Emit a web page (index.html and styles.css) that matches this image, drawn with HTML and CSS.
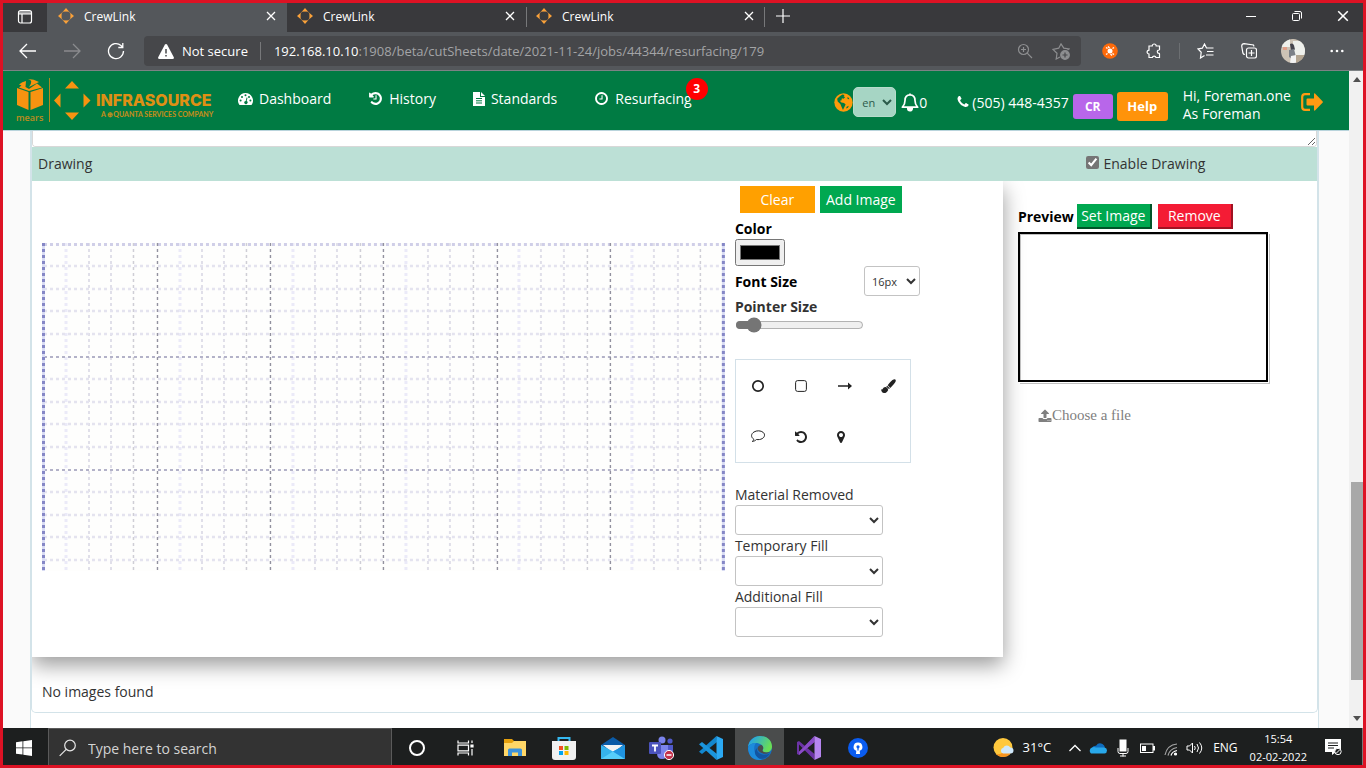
FILE: index.html
```html
<!DOCTYPE html>
<html lang="en">
<head>
<meta charset="utf-8">
<title>CrewLink</title>
<link rel="stylesheet" href="styles.css">
</head>
<body>
<svg class="defs" aria-hidden="true">
  <symbol id="i-crew" viewBox="0 0 16 16"><path fill="#f9a13a" d="M5 3.500 8 0l3 3.500zM5 12.500h6L8 16zM3.500 5v6L0 8zM12.500 5 16 8l-3.500 3z"/><circle cx="8" cy="8" r="5.200" fill="none" stroke="#f9a13a" stroke-width=".7" opacity=".6"/></symbol>
  <symbol id="i-x" viewBox="0 0 10 10"><path d="m1 1 8 8M9 1 1 9" fill="none" stroke="currentColor" stroke-width="1.300"/></symbol>
  <symbol id="i-clock" viewBox="0 0 1792 1792"><path fill="currentColor" d="M1024 544v448q0 14-9 23t-23 9h-320q-14 0-23-9t-9-23v-64q0-14 9-23t23-9h224v-352q0-14 9-23t23-9h64q14 0 23 9t9 23zm416 352q0-148-73-273t-198-198-273-73-273 73-198 198-73 273 73 273 198 198 273 73 273-73 198-198 73-273zm224 0q0 209-103 385.500t-279.500 279.500-385.500 103-385.500-103-279.500-279.500-103-385.500 103-385.500 279.500-279.500 385.500-103 385.500 103 279.500 279.500 103 385.500z"/></symbol>
  <symbol id="i-undo" viewBox="0 0 1792 1792"><path fill="currentColor" d="M1664 896q0 156-61 298t-164 245-245 164-298 61q-172 0-327-72.500t-264-204.500q-7-10-6.500-22.500t8.500-20.500l137-138q10-9 25-9 16 2 23 12 73 95 179 147t225 52q104 0 198.500-40.500t163.500-109.500 109.500-163.500 40.500-198.500-40.500-198.500-109.500-163.500-163.500-109.500-198.500-40.500q-98 0-188 35.500t-160 101.500l137 138q31 30 14 69-17 40-59 40h-448q-26 0-45-19t-19-45v-448q0-42 40-59 39-17 69 14l130 129q107-101 244.500-156.500t284.500-55.500q156 0 298 61t245 164 164 245 61 298z"/></symbol>
</svg>

<div class="tabstrip">
  <button class="tab-actions" aria-label="Tab actions"><svg width="16" height="16" viewBox="0 0 16 16" fill="none" stroke="#fff" stroke-width="1.200"><rect x="1.500" y="1.500" width="13" height="12.500" rx="2"/><path d="M2 3h12M1.500 4.800h13M5 5v9" /></svg></button>
  <div class="tab tab-active"><svg width="16" height="16"><use href="#i-crew"/></svg><a href="#">CrewLink</a><button aria-label="Close tab"><svg width="10" height="10"><use href="#i-x"/></svg></button></div>
  <div class="tab"><svg width="16" height="16"><use href="#i-crew"/></svg><a href="#">CrewLink</a><button aria-label="Close tab"><svg width="10" height="10"><use href="#i-x"/></svg></button></div>
  <div class="tab tab-divided"><svg width="16" height="16"><use href="#i-crew"/></svg><a href="#">CrewLink</a><button aria-label="Close tab"><svg width="10" height="10"><use href="#i-x"/></svg></button></div>
  <button class="new-tab" aria-label="New tab"><svg width="14" height="14" viewBox="0 0 14 14"><path d="M7 0v14M0 7h14" stroke="#fff" stroke-width="1.200"/></svg></button>
  <div class="window-buttons">
    <button aria-label="Minimize"><svg width="10" height="10" viewBox="0 0 10 10"><path d="M0 5.500h10" stroke="#fff"/></svg></button>
    <button aria-label="Restore"><svg width="10" height="10" viewBox="0 0 10 10" fill="none" stroke="#fff"><rect x=".5" y="2.500" width="7" height="7" rx="1"/><path d="M2.500.500H8A1.500 1.500 0 0 1 9.500 2v5.500"/></svg></button>
    <button aria-label="Close"><svg width="12" height="12"><use href="#i-x"/></svg></button>
  </div>
</div>

<div class="toolbar">
  <button class="tool" aria-label="Back"><svg width="18" height="16" viewBox="0 0 18 16" fill="none" stroke="#fff" stroke-width="1.300"><path d="M17 8H1.500M8 1 1 8l7 7"/></svg></button>
  <button class="tool" aria-label="Forward"><svg width="18" height="16" viewBox="0 0 18 16" fill="none" stroke="#8a8b8e" stroke-width="1.300"><path d="M1 8h15.500M10 1l7 7-7 7"/></svg></button>
  <button class="tool" aria-label="Reload"><svg width="18" height="18" viewBox="0 0 18 18" fill="none" stroke="#fff" stroke-width="1.300"><path d="M16.500 9A7.500 7.500 0 1 1 14 3.500L15.500 5M15.800 1v4.500h-4.500"/></svg></button>
  <div class="address">
    <svg width="16" height="15" viewBox="0 0 16 15"><path fill="#fff" d="M8 0q.8 0 1.200.7l6.600 12.500Q16.300 15 14.500 15h-13Q-.3 15 .2 13.200L6.800.7Q7.200 0 8 0z"/><path stroke="#46474a" stroke-width="1.500" d="M8 5v4.500M8 11v1.600"/></svg>
    <span class="not-secure">Not secure</span>
    <span class="url" role="textbox" aria-label="Address"><b>192.168.10.10</b>:1908/beta/cutSheets/date/2021-11-24/jobs/44344/resurfacing/179</span>
    <button aria-label="Zoom"><svg width="16" height="16" viewBox="0 0 16 16" fill="none" stroke="#8d8e90" stroke-width="1.200"><circle cx="6.500" cy="6.500" r="5"/><path d="m10.200 10.200 4.800 4.800M4 6.500h5M6.500 4v5"/></svg></button>
    <button aria-label="Add to favorites"><svg width="18" height="17" viewBox="0 0 18 17" fill="none" stroke="#8d8e90" stroke-width="1.200"><path d="M15.500 7 17 6l-5.200-.8L9 .9 6.700 5.200 1 6.300l4 4L4.200 16 8 14"/><circle cx="13" cy="12" r="4.300" fill="#8d8e90"/><path stroke="#46474a" d="M10.500 12h5M13 9.500v5"/></svg></button>
  </div>
  <button class="tool" aria-label="Extension"><svg width="16" height="16" viewBox="0 0 16 16"><circle cx="8" cy="8" r="7.800" fill="#fd6a0a"/><path stroke="#fff" stroke-width="1.300" d="m4 4.500 1.500 1M12 4.500l-1.500 1M4 11.500l1.500-1M12 11.500l-1.500-1M6 3.500 7.500 5M10 12.500 8.500 11"/><circle cx="8" cy="8" r="2.500" fill="#fff"/></svg></button>
  <button class="tool" aria-label="Extensions"><svg width="16" height="16" viewBox="0 0 16 16" fill="none" stroke="#fff" stroke-width="1.200"><path d="M3 3h3.200a2 2 0 1 1 4 0H13.500v3.500a1 1 0 0 1-.5.500 1.700 1.700 0 0 0 0 3.400q.5 0 .5.600V14.500H10a1.900 1.900 0 0 0-3.700 0H3V11a1.900 1.900 0 1 1 0-3.800z"/></svg></button>
  <span class="tool-divider"></span>
  <button class="tool" aria-label="Favorites"><svg width="17" height="16" viewBox="0 0 17 16" fill="none" stroke="#fff" stroke-width="1.200"><path d="M10 5H9.500L7.500 1 5.300 5.200 1 6l3.200 3.300L3.500 15l4-2.500M10 5h6.500M10 8.500h6.500M9 12h7.500"/></svg></button>
  <button class="tool" aria-label="Collections"><svg width="16" height="16" viewBox="0 0 16 16" fill="none" stroke="#fff" stroke-width="1.200"><path d="M13 3.500 12.500 2 3 .7Q1 .7.700 3l1.200 7q.4 1.500 2 1.500"/><rect x="5.500" y="5" width="10" height="10" rx="2"/><path d="M7.500 10h6M10.500 7v6"/></svg></button>
  <button class="tool" aria-label="Profile"><svg width="24" height="24" viewBox="0 0 24 24"><clipPath id="av"><circle cx="12" cy="12" r="12"/></clipPath><g clip-path="url(#av)"><path fill="#cdc3b5" d="M0 0h24v24H0z"/><path fill="#eef0ec" d="M12 2h12v14H12zM0 0h9v8H0z"/><path fill="#e0a08a" d="M2 8h4v3H2z"/><path fill="#b3a592" d="M15 16h9v8h-9z"/><path fill="#45454d" d="M9 5q3-1.500 4 1.500l1 4-4 1z"/><path fill="#7b8088" d="m8 11 5-1 2 8-4 2-3-2z"/><path fill="#f3f3f3" d="m10 17 5-1v8H9z"/></g></svg></button>
  <button class="tool" aria-label="More"><svg width="14" height="4" viewBox="0 0 14 4" fill="#fff"><circle cx="1.700" cy="2" r="1.300"/><circle cx="7" cy="2" r="1.300"/><circle cx="12.300" cy="2" r="1.300"/></svg></button>
</div>

<div class="viewport">
  <div class="site">
    <header class="header">
      <a class="logo" href="#" aria-label="Mears InfraSource"><svg width="202" height="46" viewBox="0 0 202 46" fill="#f79310">
        <path d="M12 1q6 0 11 3L13 9q5-7-1-8zM10 3 9.500 9 3 6.500Q6 3.500 10 3zM1 10l11.500 4v18L1 27zM27 10v17L14.500 32V14zM3 9.500 6 7l7 4 8-5.500 5 4-13 3.500z"/>
        <text x="0" y="43" class="logo-mears">mears</text>
        <path d="M33 0h1v44h-1z" opacity=".7"/>
        <path d="M49 10.500 56 3l7 7.500zM49 34.500h14L56 42zM44.500 15.500v14L38 22.500zM67.500 15.500l7 7-7 7z"/>
        <text x="80" y="28" class="logo-name">INFRASOURCE</text>
        <text x="85" y="39" class="logo-sub">A ⊕QUANTA SERVICES COMPANY</text>
      </svg></a>
      <nav class="nav">
        <a href="#"><svg width="15" height="12" viewBox="0 0 15 12"><path fill="#fff" d="M7.500 0A7.500 7.500 0 0 1 13.800 11.500q-.2.500-.8.500H2q-.6 0-.8-.5A7.500 7.500 0 0 1 7.500 0z"/><g fill="#007b43"><circle cx="2.600" cy="7.500" r="1"/><circle cx="4" cy="4" r="1"/><circle cx="7.500" cy="2.300" r="1"/><circle cx="11" cy="4" r="1"/><circle cx="12.400" cy="7.500" r="1"/><path d="m8.600 4.500.9.300-.8 3.300a1.600 1.600 0 1 1-1-.2z"/></g></svg>Dashboard</a>
        <a href="#"><svg width="15" height="15" viewBox="0 0 1792 1792"><use href="#i-undo"/><path fill="#fff" d="M1024 544v448q0 14-9 23t-23 9h-320q-14 0-23-9t-9-23v-64q0-14 9-23t23-9h224v-352q0-14 9-23t23-9h64q14 0 23 9t9 23z"/></svg>History</a>
        <a href="#"><svg width="12" height="14" viewBox="0 0 12 14"><path fill="#fff" d="M0 0h7v5h5v9H0zM8 0l4 4H8z"/><path stroke="#007b43" d="M3 6.500h6M3 8.800h6M3 11h6"/></svg>Standards</a>
        <a href="#" class="has-badge"><svg width="15" height="15"><use href="#i-clock"/></svg>Resurfacing<span class="badge">3</span></a>
      </nav>
      <div class="account">
        <svg width="19" height="19" viewBox="0 0 18 18"><circle cx="9" cy="9" r="8.700" fill="#ff9a0a"/><path fill="#007b43" d="m8 1.500 2 .3-.8 1.200L10.500 4 9 5.500 7.500 5 7 7l-1.500.3L7 9l2.500.5L11 11l-1.500 3-1 2-1.200-2.500L6 10.500 3.500 8 3 5.500 5.500 3zM12 13l2-1-.8 2-1.700.8zM12.500 4l1.500.5.500 1.500-1.500-.4z"/></svg>
        <select class="lang" aria-label="Language"><option>en</option></select>
        <a class="bell" href="#"><svg width="18" height="20" viewBox="0 0 18 20" fill="none" stroke="#fff" stroke-width="1.700"><path d="M9 1.500V3M9 2.800C5.500 2.800 4 5.500 4 8.500c0 4-1.500 5.300-2.700 6.700h15.400C15.500 13.800 14 12.500 14 8.500c0-3-1.500-5.700-5-5.700z" stroke-linejoin="round"/><path d="M6.800 16.500a2.200 2.200 0 0 0 4.400 0z" fill="#fff"/></svg>0</a>
        <a class="phone" href="tel:5054484357"><svg width="14" height="14" viewBox="0 0 1792 1792"><path fill="#fff" d="M1600 1240q0 27-10 70.500t-21 68.500q-21 50-122 106-94 51-186 51-27 0-53-3.500t-57-12.500-47-14.500-55.500-20.500-49-18q-98-35-175-83-127-79-264-216t-216-264q-48-77-83-175-3-9-18-49t-20.500-55.500-14.500-47-12.500-57-3.500-53q0-92 51-186 56-101 106-122 25-11 68.500-21t70.500-10q14 0 21 3 18 6 53 76 11 19 30 54t35 63.500 31 53.500q3 4 17.500 25t21.500 35.500 7 28.500q0 20-28.500 50t-62 55-62 53-28.500 46q0 9 5 22.500t8.500 20.500 14 24 11.500 19q76 137 174 235t235 174q2 1 19 11.500t24 14 20.500 8.500 22.500 5q18 0 46-28.500t53-62 55-62 50-28.500q14 0 28.500 7t35.500 21.500 25 17.500q25 15 53.500 31t63.500 35 54 30q70 35 76 53 3 7 3 21z"/></svg>(505) 448-4357</a>
        <button class="cr">CR</button>
        <button class="help">Help</button>
        <p class="hello">Hi, Foreman.one<br>As Foreman</p>
        <button class="logout" aria-label="Log out"><svg width="22" height="18" viewBox="0 0 22 18"><path d="M9 1.200H4Q1.200 1.200 1.200 4v10q0 2.800 2.800 2.800h5" fill="none" stroke="#ff9a12" stroke-width="2.200"/><path fill="#ff9a12" d="M6.500 5.500H13V1q0-1 1-.5l7.500 7.700q.8.800 0 1.600L14 17.500q-1 .5-1-.5v-4.500H6.500q-1 0-1-1v-5q0-1 1-1z"/></svg></button>
      </div>
    </header>

    <main class="sheet">
      <section class="panel">
        <textarea class="notes" aria-label="Notes"></textarea>
        <div class="band">
          <h2>Drawing</h2>
          <label><input type="checkbox" checked>Enable Drawing</label>
        </div>
        <div class="work">
          <div class="card">
            <svg class="graph" viewBox="0 0 683 328" role="img" aria-label="Drawing canvas">
              <path fill="#fefefd" d="M0 0h683v328H0z"/>
              <g fill="none" stroke-dasharray="3 3">
                <path stroke="#ebeaf8" stroke-width="3" d="M24 0v328M138 0v328M251 0v328M364 0v328M477 0v328M590 0v328"/>
                <path stroke="#e0dfe9" stroke-width="2" d="M47 0v328M69 0v328M160 0v328M182 0v328M273 0v328M295 0v328M386 0v328M408 0v328M499 0v328M522 0v328M612 0v328M636 0v328"/>
                <path stroke="#cfced6" stroke-width="1.500" d="M91.500 0v328M204.500 0v328M318.500 0v328M431.500 0v328M545.500 0v328M658.500 0v328"/>
                <path stroke="#e4e3ef" stroke-width="2.500" d="M2 23h681M2 46h681M2 68h681M2 91h681M2 136h681M2 159h681M2 181h681M2 204h681M2 249h681M2 272h681M2 294h681M2 317h681"/>
                <path stroke="#d0cfe8" stroke-width="3" d="M2 1.500h681"/>
                <path stroke="#b3b2c8" stroke-width="2" d="M2 114h681M2 227h681"/>
                <path stroke="#92919f" stroke-width="1.400" d="M115.500 0v328M228.500 0v328M341.500 0v328M455.500 0v328M568.500 0v328"/>
                <path stroke="#d9dcf4" stroke-width="3" stroke-dasharray="none" d="M1.500 0v328M681.500 0v328"/>
                <path stroke="#8587c6" stroke-width="3" d="M1.500 0v328M681.500 0v328"/>
              </g>
            </svg>
            <div class="controls">
              <div class="buttons"><button class="clear">Clear</button><button class="add">Add Image</button></div>
              <label class="strong" for="color">Color</label>
              <input id="color" type="color" value="#000000">
              <div class="font-row"><label class="strong" for="size">Font Size</label><select id="size"><option>16px</option></select></div>
              <label class="strong soft" for="pointer">Pointer Size</label>
              <input id="pointer" type="range" min="0" max="100" value="10">
              <div class="tools">
                <button aria-label="Circle"><svg width="14" height="14" viewBox="0 0 14 14"><circle cx="7" cy="7" r="5.200" fill="none" stroke="#222" stroke-width="1.700"/></svg></button>
                <button aria-label="Rectangle"><svg width="12" height="12" viewBox="0 0 12 12"><rect x=".6" y=".6" width="10.800" height="10.800" rx="2" fill="none" stroke="#222"/></svg></button>
                <button aria-label="Arrow"><svg width="14" height="8" viewBox="0 0 14 8" fill="#222"><path d="M0 3.200h10V.6L14 4l-4 3.400V4.800H0z"/></svg></button>
                <button aria-label="Brush"><svg width="15" height="14" viewBox="0 0 15 14" fill="#222"><path d="M13.200.2q2 0 1.500 2-.8 2.200-5.400 6.700L6.700 6.300Q9.700 1.500 13.200.2zM6.200 6.800l2.600 2.500q-.3.600-.9.800L5.300 7.600zM4.500 8.100q2.400.3 2.700 2.800Q6 14 3 14 .5 14 0 10.300q.9.600 1.600-.3 1-2 2.900-1.900z"/></svg></button>
                <button aria-label="Comment"><svg width="14" height="13" viewBox="0 0 14 13" fill="none" stroke="#222"><path d="M2.800 9.200C-.6 7 .2 3.600 3 2 5.500.3 10 .4 12.200 2.400c2.200 2 1.500 4.800-1 6.200-1.700 1-3.700 1.200-5.700.9-1.200 1.200-2.500 1.700-4.200 2 1-.8 1.400-1.500 1.500-2.300z"/></svg></button>
                <button aria-label="Undo"><svg width="14" height="14"><use href="#i-undo"/></svg></button>
                <button class="marker" aria-label="Marker"><svg width="14" height="14" viewBox="0 0 1792 1792" fill="#222"><path d="M1152 640q0-106-75-181t-181-75-181 75-75 181 75 181 181 75 181-75 75-181zm256 0q0 109-33 179l-364 774q-16 33-47.500 52t-67.500 19-67.500-19-46.500-52l-365-774q-33-70-33-179 0-212 150-362t362-150 362 150 150 362z"/></svg></button>
              </div>
              <label for="m1">Material Removed</label><select id="m1" class="fill"><option></option></select>
              <label for="m2">Temporary Fill</label><select id="m2" class="fill"><option></option></select>
              <label for="m3">Additional Fill</label><select id="m3" class="fill"><option></option></select>
            </div>
          </div>
          <aside class="preview">
            <div class="preview-head"><span class="strong">Preview</span><button class="set">Set Image</button><button class="remove">Remove</button></div>
            <div class="preview-box"></div>
            <label class="choose"><svg width="14" height="14" viewBox="0 0 1792 1792"><path fill="#808080" d="M1344 1472q0-26-19-45t-45-19-45 19-19 45 19 45 45 19 45-19 19-45zm256 0q0-26-19-45t-45-19-45 19-19 45 19 45 45 19 45-19 19-45zm128-224v320q0 40-28 68t-68 28h-1472q-40 0-68-28t-28-68v-320q0-40 28-68t68-28h427q21 56 70.500 92t110.500 36h256q61 0 110.500-36t70.500-92h427q40 0 68 28t28 68zm-325-648q-17 40-59 40h-256v448q0 26-19 45t-45 19h-256q-26 0-45-19t-19-45v-448h-256q-42 0-59-40-17-39 14-69l448-448q18-19 45-19t45 19l448 448q31 30 14 69z"/></svg>Choose a file<input type="file" hidden></label>
          </aside>
        </div>
        <p class="empty">No images found</p>
      </section>
    </main>
  </div>
  <div class="scrollbar" aria-hidden="true">
    <svg width="8" height="5" viewBox="0 0 8 5"><path fill="#505050" d="M0 5h8L4 0z"/></svg>
    <div class="track"><div class="thumb"></div></div>
    <svg width="8" height="5" viewBox="0 0 8 5"><path fill="#505050" d="M0 0h8L4 5z"/></svg>
  </div>
</div>

<footer class="taskbar">
  <button class="start" aria-label="Start"><svg width="16" height="16" viewBox="0 0 16 16" fill="#fff"><path d="M0 2.200 6.500 1.300v6.200H0zM7.300 1.200 16 0v7.500H7.300zM0 8.300h6.500v6.300L0 13.700zM7.300 8.300H16V16l-8.700-1.200z"/></svg></button>
  <label class="search"><svg width="18" height="18" viewBox="0 0 18 18" fill="none" stroke="#e6e6e6" stroke-width="1.200"><circle cx="11" cy="6.500" r="5.300"/><path d="m7.200 10.300-6.500 6.500"/></svg><input type="text" placeholder="Type here to search" aria-label="Search"></label>
  <div class="apps">
    <button aria-label="Cortana"><svg width="18" height="18" viewBox="0 0 18 18"><circle cx="9" cy="9" r="7" fill="none" stroke="#fff" stroke-width="2"/></svg></button>
    <button aria-label="Task view"><svg width="17" height="16" viewBox="0 0 17 16" fill="none" stroke="#fff" stroke-width="1.200"><path d="M1 .5v2.500h10.500V.5M1 15.500V13h10.500v2.500M1 5.200h10.500v5.600H1zM15 .5V3M15 9v6.500"/><path fill="#fff" d="M14 5h2v2h-2z"/></svg></button>
    <button aria-label="File Explorer"><svg width="22" height="19" viewBox="0 0 22 19"><path fill="#e5a00d" d="M0 1h8l2 2h12v8H0z"/><path fill="#ffd767" d="M0 5h8l2-2h12v15H0z"/><path fill="#3d93dc" d="M4 12q0-1.500 1.500-1.500h11Q18 10.500 18 12v6h-4v-3.500H8V18H4z"/></svg></button>
    <button aria-label="Store"><svg width="24" height="24" viewBox="0 0 24 24"><path fill="none" stroke="#35b8f0" stroke-width="2" d="M6.500 7V2h11v5"/><path fill="#f1f1f1" d="M0 5h24v16q0 3-3 3H3q-3 0-3-3z"/><path fill="#f25022" d="M7 10h4v4H7z"/><path fill="#7fba00" d="M12.500 10h4v4h-4z"/><path fill="#00a4ef" d="M7 15h4v4H7z"/><path fill="#ffb900" d="M12.500 15h4v4h-4z"/></svg></button>
    <button aria-label="Mail"><svg width="24" height="22" viewBox="0 0 24 22"><path fill="#0b5ba7" d="M0 8 12 0l12 8v5H0z"/><path fill="#f4f4f4" d="M2 8h20L12 16z"/><path fill="#35b3ec" d="m0 8 12 6.500L24 8v14H0z"/><path fill="#55cdfa" d="m12 14.500 12 7.500H0z"/><path fill="#1f93e0" d="M24 8v14l-12-7.500z"/></svg></button>
    <button aria-label="Teams"><svg width="26" height="24" viewBox="0 0 26 24"><circle cx="13" cy="4" r="3.500" fill="#7b83eb"/><circle cx="21" cy="5" r="2.600" fill="#5059c9"/><path fill="#5059c9" d="M17 9h7v7q-2 4-7 3z"/><path fill="#7b83eb" d="M8 9h11v8q-1 6-6 6t-5-6z"/><rect y="6" width="12" height="12" rx="1" fill="#4b53bc"/><path stroke="#fff" stroke-width="1.800" d="M3 9.500h6M6 9.500v6"/><circle cx="20" cy="19" r="4.600" fill="#c4314b" stroke="#fff"/><path stroke="#fff" stroke-width="1.500" d="M17.500 19h5"/></svg></button>
    <button aria-label="VS Code"><svg width="24" height="24" viewBox="0 0 24 24"><path fill="#1287cf" d="M17.500 0 18 6 3 18 0 15.800z"/><path fill="#1b95dd" d="M0 8.200 3 6l15 12-.5 6z"/><path fill="#2ba9f3" d="m17.500 0 6.500 3v18l-6.500 3z"/></svg></button>
    <button class="running" aria-label="Edge"><svg width="24" height="24" viewBox="0 0 24 24"><defs><linearGradient id="eg" x2="1" y2=".4"><stop offset=".2" stop-color="#28a7df"/><stop offset="1" stop-color="#69dd55"/></linearGradient></defs><circle cx="12" cy="12" r="12" fill="#1670c4"/><path fill="url(#eg)" d="M0 11C1 4 6 0 12 0c8 0 12 5.500 12 10.500 0 4-3 6-6 6s-4.500-1-3.500-2.500C17 11 13 7 8 7c-4 0-7 2-8 4z"/><path fill="#1c8bdc" d="M0 12q2-5 8-5c-3 3-3 13 6 16.800Q1 25.500 0 12z"/><path fill="#1355a0" d="M9 12c-1 4 4 9 13 5.500-3 5-8 6-11 5-5-3-5-8-2-10.500z"/><path fill="#4a4c4c" d="M14.500 14C16 12 15 10 13.500 9c-2 0-4 1.500-4 4 1 3 5 5.500 10 4.500l3-1.500q-8 1.500-8-2z"/></svg></button>
    <button aria-label="Visual Studio"><svg width="24" height="24" viewBox="0 0 24 24"><path fill="#6c33a6" d="m0 6 2-1 15.500 13v6L2 8.500v7L17.500 0v6L2 19l-2-1z"/><path fill="#8a4cc7" d="m2 19 15.500-13V0L2 16z"/><path fill="#b685ef" d="m17.500 0 6.500 3v18l-6.500 3z"/></svg></button>
    <button aria-label="OpenVPN"><svg width="20" height="20" viewBox="0 0 20 20"><circle cx="10" cy="10" r="10" fill="#0a5cf0"/><path fill="#fff" d="M10 4.500a4.300 4.300 0 0 1 1.700 8.300l.3 3.200H8l.3-3.200A4.300 4.300 0 0 1 10 4.500z"/><circle cx="10" cy="8.800" r="1.600" fill="#0a5cf0"/><path fill="#0a5cf0" d="M9.400 9h1.200v3.500H9.400z"/></svg></button>
  </div>
  <div class="tray">
    <span class="weather"><svg width="21" height="20" viewBox="0 0 21 20"><circle cx="10" cy="9.500" r="9.500" fill="#ffc83d"/><path fill="#f7941e" d="M17.500 15.500A9.500 9.500 0 0 1 3 16q8 1 8-5z"/><path fill="#cfe8fb" d="M10 15.500a3 3 0 0 1 .3-5.800 4 4 0 0 1 7-.2q3.200.1 3.200 3t-3 3z"/></svg>31°C</span>
    <svg width="24" height="16" viewBox="0 0 24 16"><path d="m6.500 11 5.500-5.500 5.500 5.500" fill="none" stroke="#fff" stroke-width="1.300"/></svg>
    <svg width="24" height="16" viewBox="0 0 24 16"><path fill="#0f6cbd" d="M5 8q1-2.500 4-2.300Q11.500 2 15.500 4q2 1 2.500 3.500L11 11z"/><path fill="#28a8ea" d="M4 13.500a3.500 3.500 0 0 1 1-6q2-.8 4 0l8.500 0q2.500.5 2.500 3t-2.500 3z"/></svg>
    <svg width="24" height="18" viewBox="0 0 24 18" fill="none" stroke="#fff"><rect x="9" y="1" width="6" height="11" fill="#fff"/><path d="M7 9v3.500q0 2 2 2h6q2 0 2-2V9M12 15v2.500M9 17h6"/></svg>
    <svg width="24" height="16" viewBox="0 0 24 16"><rect x="5.500" y="4" width="12.500" height="8.500" fill="none" stroke="#fff"/><path fill="#fff" d="M7 6h4v5H7zM18 6h2v4.500h-2z"/></svg>
    <svg width="24" height="16" viewBox="0 0 24 16" fill="none" stroke="#fff" stroke-width="1.200"><path opacity=".6" d="M6 15Q8 5 18 4M9 15.500Q10.500 9 18 7.500"/><path d="M12 15.500Q13 11.500 18 10.500"/><circle cx="16.500" cy="14" r="1" fill="#fff"/></svg>
    <svg width="24" height="16" viewBox="0 0 24 16" fill="none" stroke="#fff"><path d="M4 6h2.500L9.500 3v10l-3-3H4zM11.500 6q1.500 2 0 4M14 4q3 4 0 8M16.500 2.500q4.500 5.500 0 11"/></svg>
    <span class="lang-code">ENG</span>
    <time class="clock">15:54<br>02-02-2022</time>
    <svg width="18" height="17" viewBox="0 0 18 17"><path fill="#fff" d="M0 0h16v13h-5l-4 3v-3H0z"/><path stroke="#1d1f1f" d="M3 4h10M3 6.500h10M3 9h6"/><circle cx="13" cy="12.500" r="3.200" fill="#1d1f1f" stroke="#fff"/><path stroke="#fff" d="m11 14.500 4-4"/></svg>
  </div>
</footer>
</body>
</html>
```
FILE: styles.css
```css
* { box-sizing: border-box; }
html { height: 100%; }
body {
  margin: 0;
  height: 100vh;
  border: 3px solid #dd1224;
  display: flex;
  flex-direction: column;
  font-family: "Open Sans", sans-serif;
  font-size: 14px;
  line-height: 21px;
  color: #333;
  background: #1d1f1f;
  overflow: hidden;
}
button, input, select, textarea { font: inherit; }
button { border: 0; padding: 0; background: none; color: inherit; }
a { color: inherit; text-decoration: none; }
p, h2 { margin: 0; font-size: 14px; font-weight: 400; }
svg { flex: none; }
.defs { display: none; }

/* Browser tabs */
.tabstrip { display: flex; height: 29px; background: #39393c; color: #fff; font-size: 12px; flex: none; }
.tabstrip button, .start { display: flex; align-items: center; justify-content: center; }
.tab-actions { width: 44px; padding-bottom: 2px; }
.tab { display: flex; align-items: center; width: 239px; padding: 0 7px 3px 10px; }
.tab a { flex: 1; padding-left: 10px; }
.tab button { width: 18px; height: 18px; }
.tab-active { width: 240px; padding-left: 11px; background: #54575b; }
.tab-divided { background: linear-gradient(#77787a, #77787a) 0 4px / 1px 20px no-repeat, linear-gradient(#77787a, #77787a) 100% 4px / 1px 20px no-repeat; }
.new-tab { width: 36px; padding-bottom: 3px; }
.window-buttons { display: flex; margin: 0 -3px 0 auto; padding-bottom: 3px; }
.window-buttons button { width: 46px; }

/* Browser toolbar */
.toolbar { display: flex; align-items: center; height: 39px; padding: 0 4px 0 3px; flex: none; background: #54575b; border-bottom: 1px solid #7d8285; color: #fff; font-size: 13px; }
.tool { width: 44px; height: 30px; display: flex; align-items: center; justify-content: center; }
.tool-divider { width: 1px; height: 16px; margin: 0 3px; background: #6c6f72; }
.address { display: flex; align-items: center; flex: 1; height: 30px; margin: 0 7px 0 6px; padding: 0 2px 0 14px; border-radius: 4px; background: #46474a; }
.address button { width: 36px; height: 24px; display: flex; align-items: center; justify-content: center; }
.not-secure { margin-left: 8px; padding-right: 12px; border-right: 1px solid #77787a; line-height: 18px; }
.url { flex: 1; margin-left: 13px; color: #a3a4a6; white-space: nowrap; }
.url b { font-weight: 400; color: #fff; }

/* Page area */
.viewport { display: flex; flex: 1; min-height: 0; overflow: hidden; background: #fafafa; }
.site { display: flex; flex-direction: column; flex: 1; min-width: 0; }
.scrollbar { display: flex; flex-direction: column; align-items: center; width: 14px; padding: 6px 0 7px 2px; background: #f1f1f1; }
.track { display: flex; flex: 1; width: 100%; padding-top: 400px; }
.thumb { width: 100%; height: 198px; background: #a8a8a8; }

.header { display: flex; align-items: center; height: 60px; padding: 0 26px 0 13px; background: #007b43; border-bottom: 1px solid #b9d4dc; color: #fff; flex: none; }
.logo { display: flex; }
.logo-mears { font: 600 9px "Open Sans", sans-serif; opacity: .75; }
.logo-name { font: 800 16px "Inter", sans-serif; opacity: .9; }
.logo-sub { font: 700 7px "Lato", sans-serif; opacity: .8; }
.nav { display: flex; gap: 37px; margin-left: 20px; padding-bottom: 4px; }
.nav a { display: flex; align-items: center; gap: 6px; }
.has-badge { position: relative; }
.badge { position: absolute; right: -16px; top: -10px; width: 22px; height: 22px; border-radius: 50%; background: #f00; font-size: 12px; font-weight: 700; text-align: center; }
.account { display: flex; align-items: center; margin-left: auto; padding-top: 3px; }
.lang { width: 43px; height: 30px; padding: 0 1px 0 4px; border: 1px solid #b7dccb; border-radius: 5px; background: #a6d5c4; color: #2c5b4a; font-size: 11px; }
.bell { display: flex; align-items: center; margin-left: 5px; }
.phone { display: flex; align-items: center; margin-left: 29px; gap: 2px; white-space: nowrap; }
.cr { width: 40px; height: 25px; margin: 8px 0 0 4px; border-radius: 3px; background: #b866ea; font-size: 12px; font-weight: 700; }
.help { width: 51px; height: 29px; margin: 8px 15px 0 4px; border-radius: 3px; background: #ff930a; font-size: 13px; font-weight: 700; }
.hello { line-height: 18px; padding-top: 5px; white-space: nowrap; }
.logout { display: flex; margin-left: 10px; }

/* Sheet */
.sheet { flex: 1; margin: 0 30px 0 27px; border: solid #d3e3e9; border-width: 0 1px; background: #fff; }
.panel { border: 1px solid #d3e3e9; border-top: 0; border-radius: 0 0 5px 5px; overflow: hidden; }
.notes { display: block; width: 100%; height: 16px; padding: 0; border: 1px solid #d8d8d8; border-width: 0 1px 1px; border-radius: 0 0 4px 4px; background: #fff; resize: vertical; }
.band { position: relative; z-index: 1; display: grid; grid-template-columns: 9fr 2fr; align-items: center; height: 34px; padding: 0 0 2px 6px; background: #bce0d6; }
.band h2 { font-weight: 500; }
.band label { display: flex; align-items: center; gap: 4px; padding-left: 2px; font-weight: 500; }
.band input { width: 13px; height: 13px; margin: 0 0 2px; accent-color: #757575; }
.work { display: grid; grid-template-columns: 34fr 11fr; }
.card { display: flex; gap: 10px; padding: 5px 0 20px 10px; background: #fff; box-shadow: 0 8px 20px rgba(0, 0, 0, .4); }
.graph { flex: 1; min-width: 0; margin-top: 57px; align-self: flex-start; }
.controls { display: flex; flex-direction: column; align-items: flex-start; width: 268px; color: #333; }
.strong { font-weight: 700; color: #000; }
.soft { color: #333; }
.buttons { display: flex; gap: 5px; margin: 0 0 5px 5px; color: #fff; }
.clear, .add { height: 27px; width: 75px; background: #ffa000; }
.add { width: 82px; background: #00a850; }
.controls input[type="color"] { width: 50px; height: 27px; }
.font-row { display: flex; align-items: center; justify-content: space-between; width: 185px; }
.controls select { height: 30px; padding: 0 2px 0 3px; border: 1px solid #c3c3c3; border-radius: 3px; background: #fff; color: #333; font-size: 11px; }
#size { width: 56px; }
.controls input[type="range"] { width: 129px; height: 16px; margin: 0; accent-color: #757575; }
.tools { display: grid; grid-template-columns: repeat(4, 1fr); width: 176px; height: 104px; margin: 26px 0 21px; border: 1px solid #d3e0e8; color: #222; }
.tools button { display: flex; align-items: center; justify-content: center; }
.tools .marker { padding-right: 7px; }
.controls .fill { width: 148px; }
.preview { padding: 23px 0 0 15px; }
.preview-head { display: flex; align-items: center; gap: 6px; margin-bottom: 3px; color: #fff; }
.preview-head .strong { margin-right: -3px; }
.set, .remove { width: 75px; height: 25px; line-height: 20px; background: #00a850; border: 2px outset #00a850; border-width: 0 2px 2px 0; }
.remove { background: #f41c35; border-color: #f41c35; }
.preview-box { width: 250px; height: 150px; border: 2px solid #000; box-shadow: inset 1px 1px #c0c0c0, 1px 1px #fff, 2px 2px #c0c0c0; }
.choose { display: flex; align-items: center; margin: 23px 0 0 20px; color: #808080; font-family: "Liberation Serif", serif; font-size: 15px; }
.empty { padding: 24px 10px 10px; }

/* Windows taskbar */
.taskbar { display: flex; height: 37px; flex: none; background: #1d1f1f; color: #fff; }
.start { width: 45px; padding: 3px 3px 0 0; }
.search { display: flex; align-items: center; flex: 0 1 344px; gap: 11px; padding: 2px 10px 0; background: #333; border: 1px solid #5a5a5a; border-bottom: 0; }
.search input { flex: 1; min-width: 0; padding: 0; border: 0; outline: 0; background: none; color: #ddd; font-size: 14px; }
.search input::placeholder { color: #d4d4d4; }
.apps { display: flex; }
.apps button { width: 49px; display: flex; align-items: center; justify-content: center; padding-top: 2px; }
.apps .running { background: #4a4c4c; }
.tray { display: flex; align-items: center; margin-left: auto; padding: 2px 19px 0 0; border-right: 1px solid #777; }
.weather { display: flex; align-items: center; gap: 9px; margin-right: 12px; font-size: 13px; }
.lang-code { font-size: 12px; margin: 0 12px 0 6px; }
.clock { font-size: 11px; line-height: 18px; text-align: center; margin-right: 18px; }
```
